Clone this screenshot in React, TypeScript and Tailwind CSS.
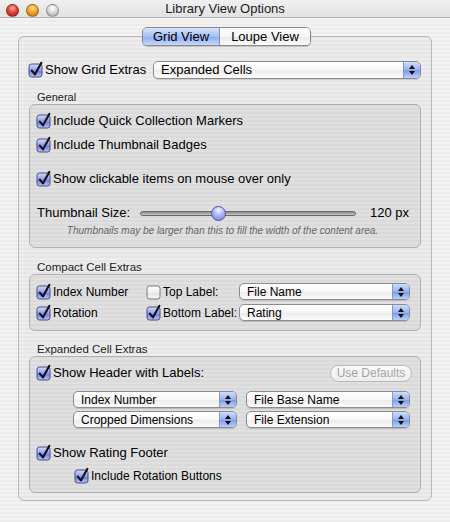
import React from "react";

const font = "font-['Lucida_Grande','Liberation_Sans',Arial,sans-serif]";

function Check({ on = true }: { on?: boolean }) {
  return (
    <svg width="16" height="16" viewBox="0 0 16 16" className="shrink-0 overflow-visible">
      <defs>
        <linearGradient id="cbOn" x1="0" y1="0" x2="0" y2="1">
          <stop offset="0" stopColor="#d3ddfa" />
          <stop offset="0.5" stopColor="#8d9cf0" />
          <stop offset="0.55" stopColor="#6d7de6" />
          <stop offset="1" stopColor="#b9c6fb" />
        </linearGradient>
        <linearGradient id="cbOff" x1="0" y1="0" x2="0" y2="1">
          <stop offset="0" stopColor="#ffffff" />
          <stop offset="0.5" stopColor="#f1f1f1" />
          <stop offset="0.55" stopColor="#e4e4e4" />
          <stop offset="1" stopColor="#fbfbfb" />
        </linearGradient>
      </defs>
      <rect x="1" y="2" width="13" height="13" rx="2.5" fill={on ? "url(#cbOn)" : "url(#cbOff)"} stroke={on ? "#4a4f7a" : "#7a7a7a"} strokeWidth="1" />
      {on && <path d="M3.8 8.6 L6.9 12.4 L13.4 0.8" fill="none" stroke="#111" strokeWidth="2.1" strokeLinecap="round" strokeLinejoin="round" />}
    </svg>
  );
}

function Popup({ label, className, text = "text-[12px]" }: { label: string; className: string; text?: string }) {
  return (
    <div className={`flex rounded-[5px] border border-[#8c8c8c] overflow-hidden bg-[linear-gradient(#ffffff_0%,#f7f7f7_50%,#ebebeb_52%,#fcfcfc_100%)] shadow-[0_1px_1px_rgba(0,0,0,0.15)] ${className}`}>
      <div className={`flex-1 flex items-center pl-[7px] text-black ${text}`}>{label}</div>
      <div className="w-[17px] flex flex-col items-center justify-center gap-[2px] border-l border-[#8a96c4] bg-[linear-gradient(#cddcfb_0%,#97b2f2_50%,#7b98ea_53%,#bcd0fb_100%)]">
        <div className="w-0 h-0 border-x-[3px] border-x-transparent border-b-[4px] border-b-[#111]" />
        <div className="w-0 h-0 border-x-[3px] border-x-transparent border-t-[4px] border-t-[#111]" />
      </div>
    </div>
  );
}

function Light({ cls }: { cls: string }) {
  return <div className={`w-[13px] h-[13px] rounded-full border border-black/30 ${cls}`} />;
}

export default function App() {
  return (
    <div className={`w-[450px] h-[522px] overflow-hidden text-black ${font} bg-[repeating-linear-gradient(0deg,#ececec_0px,#ececec_2px,#f3f3f3_2px,#f3f3f3_4px)]`}>
      {/* title bar */}
      <div className="h-[18px] grid grid-cols-[80px_1fr_80px] items-center border-b border-[#b2b2b2] bg-[linear-gradient(#f0f0f0,#e2e2e2)]">
        <div className="flex items-center gap-[7px] pl-[6px] pt-[2px]">
          <Light cls="bg-[radial-gradient(circle_at_50%_30%,#ffb3a8_0%,#e2463c_45%,#a8150f_100%)]" />
          <Light cls="bg-[radial-gradient(circle_at_50%_30%,#ffe39a_0%,#f1a626_45%,#b86a05_100%)]" />
          <Light cls="bg-[radial-gradient(circle_at_50%_30%,#ffffff_0%,#d6d6d6_50%,#9c9c9c_100%)]" />
        </div>
        <div className="text-center text-[13px] leading-[18px] text-[#1b1b1b]">Library View Options</div>
        <div />
      </div>

      <div className="px-[18px] pt-[9px]">
        {/* segmented control */}
        <div className="relative z-10 flex justify-center -mb-[10px] pl-[3px]">
          <div className="flex h-[19px] rounded-[5px] border border-[#8a8a8a] overflow-hidden shadow-[0_1px_1px_rgba(0,0,0,0.2)] text-[13px]">
            <div className="w-[77px] flex items-center justify-center border-r border-[#7c8fc0] bg-[linear-gradient(#d6e3fb_0%,#a3bff3_50%,#8eaef0_52%,#c4d7fb_100%)]">Grid View</div>
            <div className="w-[90px] flex items-center justify-center bg-[linear-gradient(#ffffff_0%,#f6f6f6_50%,#e9e9e9_52%,#fbfbfb_100%)]">Loupe View</div>
          </div>
        </div>

        {/* tab box */}
        <div className="h-[465px] rounded-[6px] border border-[#b6b6b6] bg-black/[0.025] pl-[9px] pr-[10px] pt-[24px]">
          <div className="flex items-center h-[18px]">
            <Check />
            <span className="ml-[1px] text-[13px]">Show Grid Extras</span>
            <Popup label="Expanded Cells" className="ml-auto w-[268px] h-[18px]" text="text-[13px]" />
          </div>

          <div className="mt-[12px] h-[13px] leading-[13px] text-[11px] pl-[9px] text-[#222]">General</div>
          <div className="ml-px h-[144px] rounded-[6px] border border-[#b0b0b0] bg-black/[0.05] pl-[6px] pr-[11px] pt-[8px]">
            <div className="flex items-center h-[16px] gap-[1px] text-[13px]"><Check /><span>Include Quick Collection Markers</span></div>
            <div className="mt-[8px] flex items-center h-[16px] gap-[1px] text-[13px]"><Check /><span>Include Thumbnail Badges</span></div>
            <div className="mt-[18px] flex items-center h-[16px] gap-[1px] text-[13px]"><Check /><span>Show clickable items on mouse over only</span></div>
            <div className="mt-[18px] flex items-center h-[16px] text-[13px]">
              <span className="pl-[1px]">Thumbnail Size:</span>
              <div className="relative ml-[10px] w-[216px] h-[5px] rounded-full border border-[#6a6a6a] bg-[linear-gradient(#8a8a8a,#c8c8c8)]">
                <div className="absolute left-[70px] top-[-6px] w-[15px] h-[15px] rounded-full border border-[#4b5a9a] bg-[radial-gradient(circle_at_50%_25%,#f2f5ff_0%,#a9b8f7_45%,#6679e0_100%)]" />
              </div>
              <span className="ml-auto">120 px</span>
            </div>
            <div className="mt-[4px] h-[12px] leading-[12px] text-center italic text-[10px] text-[#666]">
              Thumbnails may be larger than this to fill the width of the content area.
            </div>
          </div>

          <div className="mt-[13px] h-[13px] leading-[13px] text-[11.5px] pl-[9px] text-[#222]">Compact Cell Extras</div>
          <div className="ml-px h-[57px] rounded-[6px] border border-[#b0b0b0] bg-black/[0.05] pl-[6px] pt-[8px] text-[12px]">
            <div className="flex items-center h-[17px]">
              <div className="w-[110px] flex items-center gap-[1px]"><Check /><span>Index Number</span></div>
              <div className="w-[93px] flex items-center gap-[1px]"><Check on={false} /><span>Top Label:</span></div>
              <Popup label="File Name" className="w-[171px] h-[17px]" />
            </div>
            <div className="mt-[4px] flex items-center h-[17px]">
              <div className="w-[110px] flex items-center gap-[1px]"><Check /><span>Rotation</span></div>
              <div className="w-[93px] flex items-center gap-[1px]"><Check /><span>Bottom Label:</span></div>
              <Popup label="Rating" className="w-[171px] h-[17px]" />
            </div>
          </div>

          <div className="mt-[12px] h-[13px] leading-[13px] text-[11.5px] pl-[9px] text-[#222]">Expanded Cell Extras</div>
          <div className="ml-px h-[137px] rounded-[6px] border border-[#b0b0b0] bg-black/[0.05] pl-[6px] pr-[8px] pt-[7px]">
            <div className="flex items-center h-[18px] text-[13px]">
              <Check />
              <span className="ml-[1px]">Show Header with Labels:</span>
              <div className="ml-auto w-[82px] h-[17px] rounded-full border border-[#b9b9b9] bg-[linear-gradient(#fbfbfb,#ececec)] flex items-center justify-center text-[12px] text-[#a4a4a4]">Use Defaults</div>
            </div>
            <div className="mt-[9px] pl-[37px] flex gap-[9px]">
              <Popup label="Index Number" className="w-[164px] h-[17px]" />
              <Popup label="File Base Name" className="w-[164px] h-[17px]" />
            </div>
            <div className="mt-[3px] pl-[37px] flex gap-[9px]">
              <Popup label="Cropped Dimensions" className="w-[164px] h-[17px]" />
              <Popup label="File Extension" className="w-[164px] h-[17px]" />
            </div>
            <div className="mt-[16px] flex items-center h-[18px] gap-[1px] text-[13px]"><Check /><span>Show Rating Footer</span></div>
            <div className="mt-[6px] pl-[38px] flex items-center h-[16px] gap-[1px] text-[12px]"><Check /><span>Include Rotation Buttons</span></div>
          </div>
        </div>
      </div>
    </div>
  );
}
